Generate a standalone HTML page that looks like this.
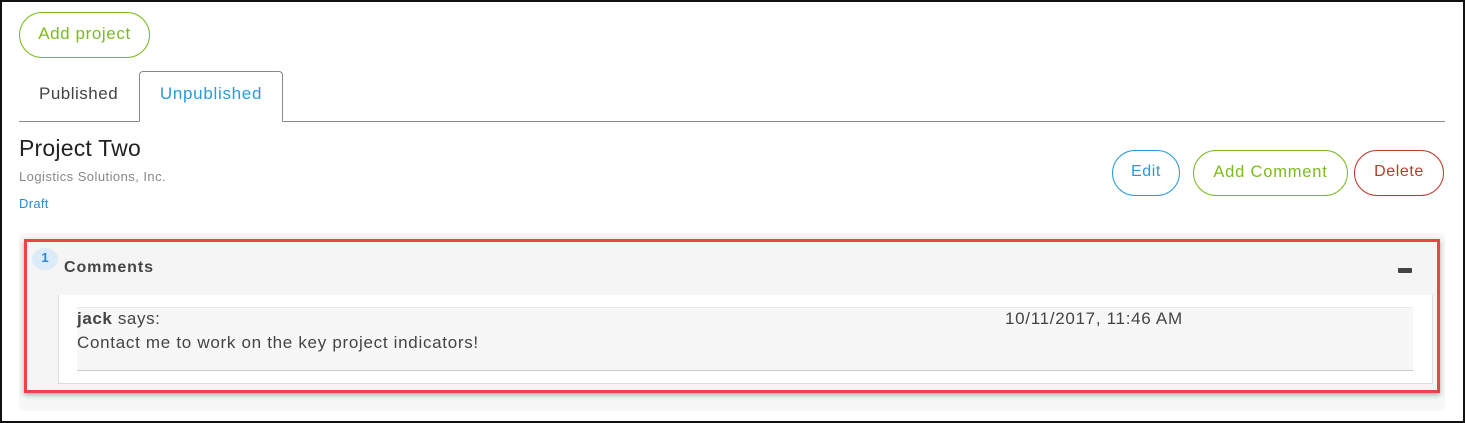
<!DOCTYPE html>
<html><head><style>
*{margin:0;padding:0;box-sizing:border-box}
html,body{width:1465px;height:423px;overflow:hidden;background:#fff;font-family:"Liberation Sans",sans-serif}
.frame{position:absolute;left:0;top:0;width:1465px;height:423px;border:2px solid #111;border-right-width:2px}
.abs{position:absolute}
.btn{position:absolute;border:1px solid;border-radius:23px;font-size:16px;letter-spacing:0.6px;display:flex;align-items:center;justify-content:center;background:#fff;padding-bottom:2px}
</style></head><body>
<div class="frame"></div>
<div class="btn" style="left:19px;top:12px;width:131px;height:46px;border-color:#7cbb1e;color:#7cbb1e;font-size:17px">Add project</div>
<div class="abs" style="left:19px;top:121px;width:1426px;height:1px;background:#888"></div>
<div class="abs" style="left:39px;top:84px;font-size:17px;color:#444;letter-spacing:0.5px">Published</div>
<div class="abs" style="left:139px;top:71px;width:144px;height:51px;border:1px solid #888;border-bottom:1px solid #fff;border-radius:4px 4px 0 0;background:#fff;color:#2a9ad8;font-size:17px;letter-spacing:0.7px;padding-top:12px;text-align:center">Unpublished</div>
<div class="abs" style="left:19px;top:135px;font-size:23px;color:#222;letter-spacing:0.2px">Project Two</div>
<div class="abs" style="left:19px;top:169px;font-size:13px;color:#888;letter-spacing:0.45px">Logistics Solutions, Inc.</div>
<div class="abs" style="left:19px;top:196px;font-size:13px;color:#2a8ad8;letter-spacing:0.3px">Draft</div>
<div class="btn" style="left:1112px;top:150px;width:68px;height:46px;border-color:#2a9ad8;color:#2a9ad8">Edit</div>
<div class="btn" style="left:1193px;top:150px;width:155px;height:46px;border-color:#7cbb1e;color:#7cbb1e;letter-spacing:0.8px;font-size:16.5px">Add Comment</div>
<div class="btn" style="left:1354px;top:150px;width:90px;height:46px;border-color:#c0392b;color:#c0392b">Delete</div>
<div class="abs" style="left:19px;top:233px;width:1426px;height:178px;background:#f7f7f7;border-radius:6px"></div>
<div class="abs" style="left:24px;top:239px;width:1416px;height:154px;border:3px solid #f04444;background:#f5f5f5;box-shadow:0 2px 5px rgba(0,0,0,.3)"></div>
<div class="abs" style="left:32px;top:248px;width:26px;height:22px;border-radius:50%;background:#dcebf8;color:#2a8ad8;font-size:13px;font-weight:bold;text-align:center;line-height:20px">1</div>
<div class="abs" style="left:64px;top:259px;font-size:16px;font-weight:bold;color:#444;letter-spacing:0.9px">Comments</div>
<div class="abs" style="left:1398px;top:268px;width:14px;height:5px;background:#444;border-radius:1px"></div>
<div class="abs" style="left:58px;top:295px;width:1375px;height:89px;background:#fff;border:1px solid #ddd;border-top:none"></div>
<div class="abs" style="left:77px;top:307px;width:1336px;height:64px;background:#f7f7f7;border-top:1px solid #e8e8e8;border-bottom:1px solid #ccc"></div>
<div class="abs" style="left:77px;top:309px;font-size:17px;color:#444;letter-spacing:0.6px"><b>jack</b> says:</div>
<div class="abs" style="left:1005px;top:309px;font-size:17px;color:#444;letter-spacing:0.7px">10/11/2017, 11:46 AM</div>
<div class="abs" style="left:77px;top:333px;font-size:17px;color:#444;letter-spacing:0.7px">Contact me to work on the key project indicators!</div>
</body></html>
